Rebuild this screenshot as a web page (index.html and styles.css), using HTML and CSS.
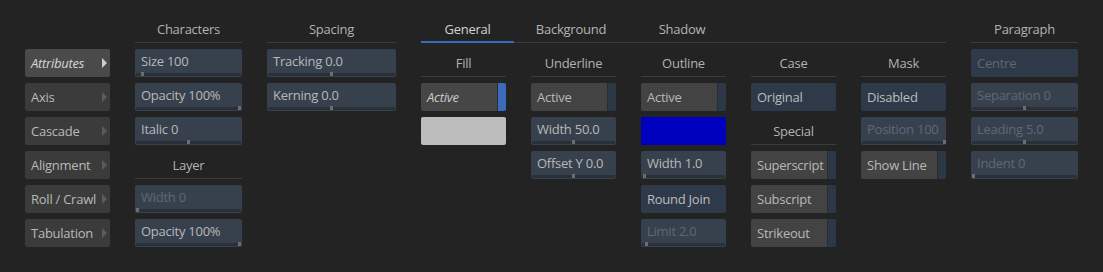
FILE: index.html
```html
<!DOCTYPE html>
<html>
<head>
<meta charset="utf-8">
<link rel="stylesheet" href="styles.css">
</head>
<body>
<div class="panel">
  <nav class="nav">
    <div class="navbtn current">Attributes<span class="arrow"></span></div>
    <div class="navbtn">Axis<span class="arrow"></span></div>
    <div class="navbtn">Cascade<span class="arrow"></span></div>
    <div class="navbtn">Alignment<span class="arrow"></span></div>
    <div class="navbtn">Roll / Crawl<span class="arrow"></span></div>
    <div class="navbtn">Tabulation<span class="arrow"></span></div>
  </nav>

  <section class="col wide">
    <div class="hdr">Characters</div>
    <div class="slider"><span class="lbl">Size 100</span><div class="track"><i class="handle" style="--pos:5%"></i></div></div>
    <div class="slider"><span class="lbl">Opacity 100%</span><div class="track"><i class="handle" style="--pos:100%"></i></div></div>
    <div class="slider"><span class="lbl">Italic 0</span><div class="track"><i class="handle" style="--pos:50%"></i></div></div>
    <div class="hdr sub">Layer</div>
    <div class="slider disabled"><span class="lbl">Width 0</span><div class="track"><i class="handle" style="--pos:0%"></i></div></div>
    <div class="slider"><span class="lbl">Opacity 100%</span><div class="track"><i class="handle" style="--pos:100%"></i></div></div>
  </section>

  <section class="col spacing">
    <div class="hdr">Spacing</div>
    <div class="slider"><span class="lbl">Tracking 0.0</span><div class="track"><i class="handle" style="--pos:50%"></i></div></div>
    <div class="slider"><span class="lbl">Kerning 0.0</span><div class="track"><i class="handle" style="--pos:50%"></i></div></div>
  </section>

  <div class="tabarea">
    <div class="tabbar">
      <div class="tab active t-general">General</div>
      <div class="tab t-bg">Background</div>
      <div class="tab t-shadow">Shadow</div>
    </div>
    <div class="tabcols">
      <section class="col narrow">
        <div class="hdr">Fill</div>
        <div class="toggle on"><span class="lbl italic">Active</span><span class="strip"></span></div>
        <div class="swatch grey"></div>
      </section>
      <section class="col narrow">
        <div class="hdr">Underline</div>
        <div class="toggle"><span class="lbl">Active</span><span class="strip"></span></div>
        <div class="slider"><span class="lbl">Width 50.0</span><div class="track"><i class="handle" style="--pos:50%"></i></div></div>
        <div class="slider"><span class="lbl">Offset Y 0.0</span><div class="track"><i class="handle" style="--pos:50%"></i></div></div>
      </section>
      <section class="col narrow">
        <div class="hdr">Outline</div>
        <div class="toggle"><span class="lbl">Active</span><span class="strip"></span></div>
        <div class="swatch blue"></div>
        <div class="slider"><span class="lbl">Width 1.0</span><div class="track"><i class="handle" style="--pos:1%"></i></div></div>
        <div class="button">Round Join</div>
        <div class="slider disabled"><span class="lbl">Limit 2.0</span><div class="track"><i class="handle" style="--pos:4%"></i></div></div>
      </section>
      <section class="col narrow">
        <div class="hdr">Case</div>
        <div class="button">Original</div>
        <div class="hdr sub">Special</div>
        <div class="toggle"><span class="lbl">Superscript</span><span class="strip"></span></div>
        <div class="toggle"><span class="lbl">Subscript</span><span class="strip"></span></div>
        <div class="toggle"><span class="lbl">Strikeout</span><span class="strip"></span></div>
      </section>
      <section class="col narrow">
        <div class="hdr">Mask</div>
        <div class="button">Disabled</div>
        <div class="slider disabled"><span class="lbl">Position 100</span><div class="track"><i class="handle" style="--pos:100%"></i></div></div>
        <div class="toggle"><span class="lbl">Show Line</span><span class="strip"></span></div>
      </section>
    </div>
  </div>

  <section class="col wide">
    <div class="hdr">Paragraph</div>
    <div class="button disabled">Centre</div>
    <div class="slider disabled"><span class="lbl">Separation 0</span><div class="track"><i class="handle" style="--pos:50%"></i></div></div>
    <div class="slider disabled"><span class="lbl">Leading 5.0</span><div class="track"><i class="handle" style="--pos:50%"></i></div></div>
    <div class="slider disabled"><span class="lbl">Indent 0</span><div class="track"><i class="handle" style="--pos:0%"></i></div></div>
  </section>
</div>
</body>
</html>
```

FILE: styles.css
```css
html, body {
  margin: 0;
  padding: 0;
  background: #232323;
  width: 1103px;
  height: 272px;
  overflow: hidden;
}

.panel {
  display: flex;
  align-items: flex-start;
  gap: 25px;
  padding: 18px 0 0 25px;
  font-family: "Open Sans", "Noto Sans", sans-serif;
  font-size: 13px;
  letter-spacing: -0.25px;
  color: #b6b6b6;
}

/* left navigation */
.nav {
  width: 85px;
  margin-top: 31px;
  display: flex;
  flex-direction: column;
  gap: 6px;
}
.navbtn {
  position: relative;
  height: 28px;
  line-height: 28px;
  padding-left: 6px;
  background: #3b3b3b;
  border-radius: 2px;
  color: #b9b9b9;
  white-space: nowrap;
}
.navbtn.current {
  background: #4a4a4a;
  color: #d6d6d6;
  font-style: italic;
}
.arrow {
  position: absolute;
  right: 3px;
  top: 9px;
  width: 0;
  height: 0;
  border-top: 5px solid transparent;
  border-bottom: 5px solid transparent;
  border-left: 5px solid #5c5c5c;
}
.navbtn.current .arrow {
  border-left-color: #cfcfcf;
}

/* columns */
.col {
  display: flex;
  flex-direction: column;
  gap: 6px;
}
.col.wide { width: 107px; }
.col.spacing { width: 129px; }
.col.narrow { width: 85px; }

.hdr {
  height: 24px;
  line-height: 23px;
  text-align: center;
  border-bottom: 1px solid #3c3c3c;
  color: #b2b2b2;
  white-space: nowrap;
}
.hdr.sub {
  margin-top: 3px;
}

/* slider */
.slider {
  position: relative;
  height: 28px;
  background: #37414d;
  border-radius: 2px;
  white-space: nowrap;
  overflow: hidden;
}
.slider .lbl {
  display: block;
  padding-left: 6px;
  line-height: 24px;
  color: #b8b8b8;
}
.track {
  position: absolute;
  left: 1px;
  right: 1px;
  bottom: 1px;
  height: 3px;
  background: #2a3038;
}
.handle {
  position: absolute;
  bottom: 0;
  left: calc(var(--pos) - var(--pos) * 3 / 100);
  width: 3px;
  height: 4px;
  background: #6d6d6d;
}
.slider.disabled .lbl {
  color: #5f6874;
}

/* toggles */
.toggle {
  height: 28px;
  display: flex;
  border-radius: 2px;
  overflow: hidden;
}
.toggle .lbl {
  flex: 1;
  background: #434343;
  line-height: 28px;
  padding-left: 6px;
  color: #b8b8b8;
  white-space: nowrap;
  overflow: hidden;
}
.toggle .lbl.italic { font-style: italic; color: #cbcbcb; background: #464646; }
.toggle .strip {
  width: 8px;
  flex: none;
  border-left: 1px solid #2c2c2c;
  background: #2d3847;
}
.toggle.on .strip {
  background: #3b6cbc;
}

/* buttons */
.button {
  height: 28px;
  line-height: 28px;
  padding-left: 6px;
  background: #2e3a4a;
  border-radius: 2px;
  color: #bcbcbc;
  white-space: nowrap;
}
.button.disabled {
  color: #5f6874;
}

/* swatches */
.swatch {
  height: 28px;
  border-radius: 2px;
}
.swatch.grey { background: #bdbdbd; }
.swatch.blue { background: #0000bf; border-radius: 1px; }

/* tabs */
.tabarea {
  width: 525px;
}
.tabbar {
  display: flex;
  height: 24px;
  border-bottom: 1px solid #3c3c3c;
}
.tab {
  line-height: 23px;
  text-align: center;
  color: #b4b4b4;
  white-space: nowrap;
}
.tab.active {
  color: #d2d2d2;
  box-shadow: inset 0 -2px 0 #3a6cbc;
  height: 25px;
}
.t-general { width: 93px; }
.t-bg { width: 114px; }
.t-shadow { width: 108px; }

.tabcols {
  display: flex;
  gap: 25px;
  margin-top: 9px;
}
```
